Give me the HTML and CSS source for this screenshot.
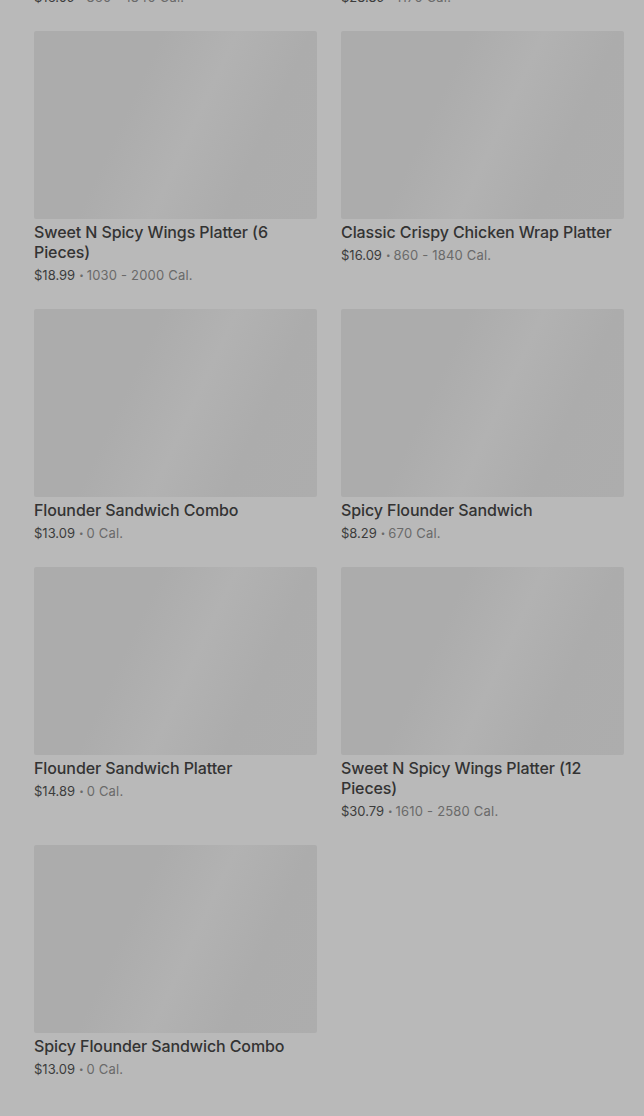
FILE: index.html
```
<!DOCTYPE html>
<html>
<head>
<meta charset="utf-8">
<link rel="stylesheet" href="styles.css">
</head>
<body>
<main class="page">
  <div class="grid">
    <div class="card"><div class="thumb"></div><div class="title">Classic Crispy Chicken Wrap Combo</div><div class="meta"><span class="price">$16.09</span><span class="dot">•</span><span class="cal">860 - 1840 Cal.</span></div></div>
    <div class="card"><div class="thumb"></div><div class="title">Spicy Chicken Sandwich Platter</div><div class="meta"><span class="price">$28.89</span><span class="dot">•</span><span class="cal">1170 Cal.</span></div></div>

    <div class="card"><div class="thumb"></div><div class="title">Sweet N Spicy Wings Platter (6 Pieces)</div><div class="meta"><span class="price">$18.99</span><span class="dot">•</span><span class="cal">1030 - 2000 Cal.</span></div></div>
    <div class="card"><div class="thumb"></div><div class="title">Classic Crispy Chicken Wrap Platter</div><div class="meta"><span class="price">$16.09</span><span class="dot">•</span><span class="cal">860 - 1840 Cal.</span></div></div>

    <div class="card"><div class="thumb"></div><div class="title">Flounder Sandwich Combo</div><div class="meta"><span class="price">$13.09</span><span class="dot">•</span><span class="cal">0 Cal.</span></div></div>
    <div class="card"><div class="thumb"></div><div class="title">Spicy Flounder Sandwich</div><div class="meta"><span class="price">$8.29</span><span class="dot">•</span><span class="cal">670 Cal.</span></div></div>

    <div class="card"><div class="thumb"></div><div class="title">Flounder Sandwich Platter</div><div class="meta"><span class="price">$14.89</span><span class="dot">•</span><span class="cal">0 Cal.</span></div></div>
    <div class="card"><div class="thumb"></div><div class="title">Sweet N Spicy Wings Platter (12 Pieces)</div><div class="meta"><span class="price">$30.79</span><span class="dot">•</span><span class="cal">1610 - 2580 Cal.</span></div></div>

    <div class="card"><div class="thumb"></div><div class="title">Spicy Flounder Sandwich Combo</div><div class="meta"><span class="price">$13.09</span><span class="dot">•</span><span class="cal">0 Cal.</span></div></div>
  </div>
</main>
</body>
</html>
```

FILE: styles.css
```
html, body {
  margin: 0;
  padding: 0;
  background: #b9b9b9;
  height: 1116px;
  overflow: hidden;
}
.page {
  padding: 0 20px 0 34px;
  font-family: Inter, "Liberation Sans", sans-serif;
}
.grid {
  margin-top: -227px;
  display: grid;
  grid-template-columns: 283px 283px;
  column-gap: 24px;
  row-gap: 24px;
  align-items: start;
}
.card {
  display: flex;
  flex-direction: column;
}
.thumb {
  height: 188px;
  border-radius: 2px;
  background: linear-gradient(115deg, #acacac 0%, #acacac 35%, #b2b2b2 55%, #acacac 75%, #adadad 100%);
  margin-bottom: 3px;
}
.title {
  font-size: 16px;
  line-height: 20px;
  font-weight: 500;
  color: #333333;
  letter-spacing: -0.1px;
}
.meta {
  margin-top: 3px;
  font-size: 13px;
  line-height: 20px;
  color: #6a6a6a;
  display: flex;
  align-items: center;
}
.price {
  color: #3c3c3c;
}
.dot {
  font-size: 8px;
  margin: 0 3px 0 4px;
  color: #6a6a6a;
}
.cal {
  color: #6a6a6a;
  letter-spacing: 0.2px;
}
```
